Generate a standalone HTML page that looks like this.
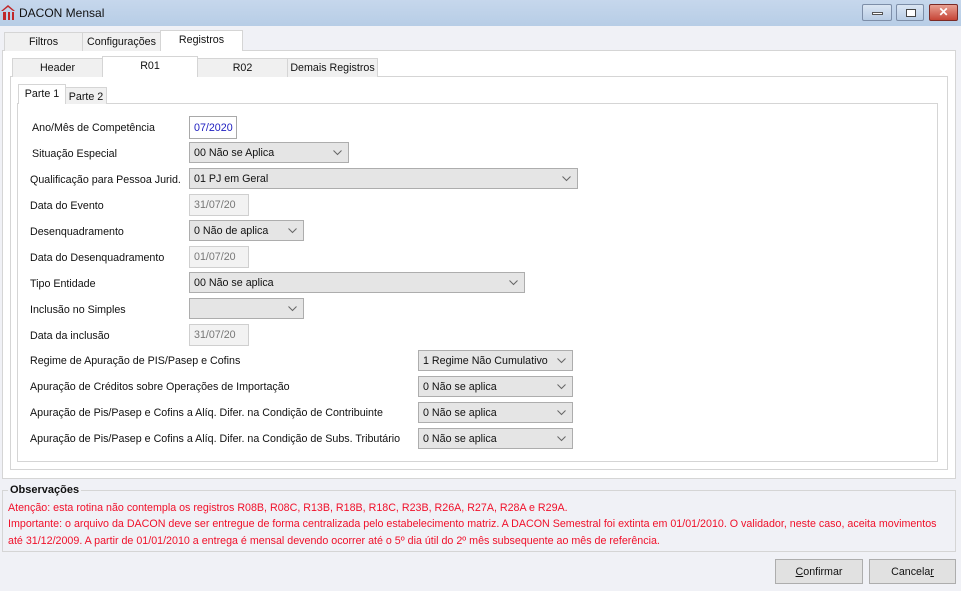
<!DOCTYPE html>
<html><head><meta charset="utf-8"><style>
*{box-sizing:border-box;margin:0;padding:0}
body{width:961px;height:591px;overflow:hidden;background:#f0f1f6;font-family:"Liberation Sans",sans-serif;font-size:10.7px;color:#111;position:relative}
.a{position:absolute}
.title{left:0;top:0;width:961px;height:26px;background:linear-gradient(#c6d7ec,#b7cde6);}
.tab{position:absolute;border:1px solid #d5d5d5;border-bottom:none;background:#f0f0f0;text-align:center;line-height:19px;font-size:10.7px}
.tab.sel{background:#fff;}
.panel{position:absolute;background:#fff;border:1px solid #d5d5d5}
.lbl{position:absolute;font-size:10.7px;white-space:nowrap}
.cb{position:absolute;height:21px;background:#e5e5e5;border:1px solid #adadad;padding-left:4px;line-height:20px;font-size:10.7px;white-space:nowrap}
.cb svg{position:absolute;right:6px;top:7px}
.tx{position:absolute;height:22px;border:1px solid #cfcfcf;background:#f2f2f2;color:#777;padding-left:4px;line-height:21px;font-size:10.7px}
.btn{position:absolute;height:25px;background:#e1e1e1;border:1px solid #adadad;text-align:center;line-height:24px;font-size:10.7px}
.red{color:#f0102a;font-size:10.7px;line-height:17px;position:absolute;white-space:nowrap}
</style></head><body>
<div class="a title"></div>
<svg class="a" style="left:1px;top:5px" width="15" height="15" viewBox="0 0 15 15"><path d="M0 6 L7 0 L14 6 L12 6 L7 2 L2 6Z" fill="#c0282a"/><rect x="2" y="7" width="3" height="8" fill="#c0282a"/><rect x="7" y="7" width="2" height="8" fill="#c0282a"/><rect x="11" y="7" width="2" height="8" fill="#c0282a"/></svg>
<div class="a" style="left:19px;top:6px;font-size:12px">DACON Mensal</div>
<div class="a" style="left:862px;top:4px;width:30px;height:17px;border:1px solid #7d8ea8;border-radius:2px;background:linear-gradient(#dbe6f3,#b9cde5)"><div class="a" style="left:9px;top:7px;width:11px;height:3px;background:#fff;border:1px solid #555"></div></div>
<div class="a" style="left:896px;top:4px;width:28px;height:17px;border:1px solid #7d8ea8;border-radius:2px;background:linear-gradient(#dbe6f3,#b9cde5)"><div class="a" style="left:9px;top:4px;width:10px;height:8px;border:1px solid #444;background:#fff"></div></div>
<div class="a" style="left:929px;top:4px;width:29px;height:17px;border:1px solid #7a2a25;border-radius:2px;background:linear-gradient(#e8a092,#c64536);color:#fff;font-weight:bold;text-align:center;line-height:15px;font-size:12px">✕</div>

<div class="panel" style="left:2px;top:50px;width:954px;height:429px"></div>
<div class="tab" style="left:4px;top:32px;width:79px;height:19px">Filtros</div>
<div class="tab" style="left:82px;top:32px;width:79px;height:19px">Configurações</div>
<div class="tab sel" style="left:160px;top:30px;width:83px;height:21px;line-height:19px">Registros</div>

<div class="panel" style="left:10px;top:76px;width:938px;height:394px"></div>
<div class="tab" style="left:12px;top:58px;width:91px;height:19px">Header</div>
<div class="tab" style="left:197px;top:58px;width:91px;height:19px">R02</div>
<div class="tab" style="left:287px;top:58px;width:91px;height:19px">Demais Registros</div>
<div class="tab sel" style="left:102px;top:56px;width:96px;height:21px;line-height:19px">R01</div>

<div class="panel" style="left:17px;top:103px;width:921px;height:359px"></div>
<div class="tab" style="left:65px;top:87px;width:42px;height:17px;line-height:18px">Parte 2</div>
<div class="tab sel" style="left:18px;top:84px;width:48px;height:20px">Parte 1</div>

<div class="lbl" style="left:32px;top:122px">Ano/Mês de Competência</div>
<div class="tx" style="left:189px;top:116px;width:48px;height:23px;background:#fff;border-color:#a9a9a9;color:#2020c0;line-height:22px">07/2020</div>
<div class="lbl" style="left:32px;top:148px">Situação Especial</div>
<div class="cb" style="left:189px;top:142px;width:160px">00 Não se Aplica<svg width="9" height="6"><path d="M0.5 0.5L4.5 4.5L8.5 0.5" stroke="#666" fill="none"/></svg></div>
<div class="lbl" style="left:30px;top:174px">Qualificação para Pessoa Jurid.</div>
<div class="cb" style="left:189px;top:168px;width:389px">01 PJ em Geral<svg width="9" height="6"><path d="M0.5 0.5L4.5 4.5L8.5 0.5" stroke="#666" fill="none"/></svg></div>
<div class="lbl" style="left:30px;top:200px">Data do Evento</div>
<div class="tx" style="left:189px;top:194px;width:60px">31/07/20</div>
<div class="lbl" style="left:30px;top:226px">Desenquadramento</div>
<div class="cb" style="left:189px;top:220px;width:115px">0 Não de aplica<svg width="9" height="6"><path d="M0.5 0.5L4.5 4.5L8.5 0.5" stroke="#666" fill="none"/></svg></div>
<div class="lbl" style="left:30px;top:252px">Data do Desenquadramento</div>
<div class="tx" style="left:189px;top:246px;width:60px">01/07/20</div>
<div class="lbl" style="left:30px;top:278px">Tipo Entidade</div>
<div class="cb" style="left:189px;top:272px;width:336px">00 Não se aplica<svg width="9" height="6"><path d="M0.5 0.5L4.5 4.5L8.5 0.5" stroke="#666" fill="none"/></svg></div>
<div class="lbl" style="left:30px;top:304px">Inclusão no Simples</div>
<div class="cb" style="left:189px;top:298px;width:115px"><svg width="9" height="6"><path d="M0.5 0.5L4.5 4.5L8.5 0.5" stroke="#666" fill="none"/></svg></div>
<div class="lbl" style="left:30px;top:330px">Data da inclusão</div>
<div class="tx" style="left:189px;top:324px;width:60px">31/07/20</div>

<div class="lbl" style="left:30px;top:355px">Regime de Apuração de PIS/Pasep e Cofins</div>
<div class="cb" style="left:418px;top:350px;width:155px">1 Regime Não Cumulativo<svg width="9" height="6"><path d="M0.5 0.5L4.5 4.5L8.5 0.5" stroke="#666" fill="none"/></svg></div>
<div class="lbl" style="left:30px;top:381px">Apuração de Créditos sobre Operações de Importação</div>
<div class="cb" style="left:418px;top:376px;width:155px">0 Não se aplica<svg width="9" height="6"><path d="M0.5 0.5L4.5 4.5L8.5 0.5" stroke="#666" fill="none"/></svg></div>
<div class="lbl" style="left:30px;top:407px">Apuração de Pis/Pasep e Cofins a Alíq. Difer. na Condição de Contribuinte</div>
<div class="cb" style="left:418px;top:402px;width:155px">0 Não se aplica<svg width="9" height="6"><path d="M0.5 0.5L4.5 4.5L8.5 0.5" stroke="#666" fill="none"/></svg></div>
<div class="lbl" style="left:30px;top:433px">Apuração de Pis/Pasep e Cofins a Alíq. Difer. na Condição de Subs. Tributário</div>
<div class="cb" style="left:418px;top:428px;width:155px">0 Não se aplica<svg width="9" height="6"><path d="M0.5 0.5L4.5 4.5L8.5 0.5" stroke="#666" fill="none"/></svg></div>

<div class="a" style="left:2px;top:490px;width:954px;height:62px;border:1px solid #d5d5d5"></div>
<div class="a" style="left:8px;top:484px;padding:0 2px;background:#f0f1f6;font-weight:bold;font-size:11px">Observações</div>
<div class="red" style="left:8px;top:500px">Atenção: esta rotina não contempla os registros R08B, R08C, R13B, R18B, R18C, R23B, R26A, R27A, R28A e R29A.</div>
<div class="red" style="left:8px;top:516px">Importante: o arquivo da DACON deve ser entregue de forma centralizada pelo estabelecimento matriz. A DACON Semestral foi extinta em 01/01/2010. O validador, neste caso, aceita movimentos</div>
<div class="red" style="left:8px;top:533px">até 31/12/2009. A partir de 01/01/2010 a entrega é mensal devendo ocorrer até o 5º dia útil do 2º mês subsequente ao mês de referência.</div>

<div class="btn" style="left:775px;top:559px;width:88px"><u>C</u>onfirmar</div>
<div class="btn" style="left:869px;top:559px;width:87px">Cancela<u>r</u></div>
</body></html>
